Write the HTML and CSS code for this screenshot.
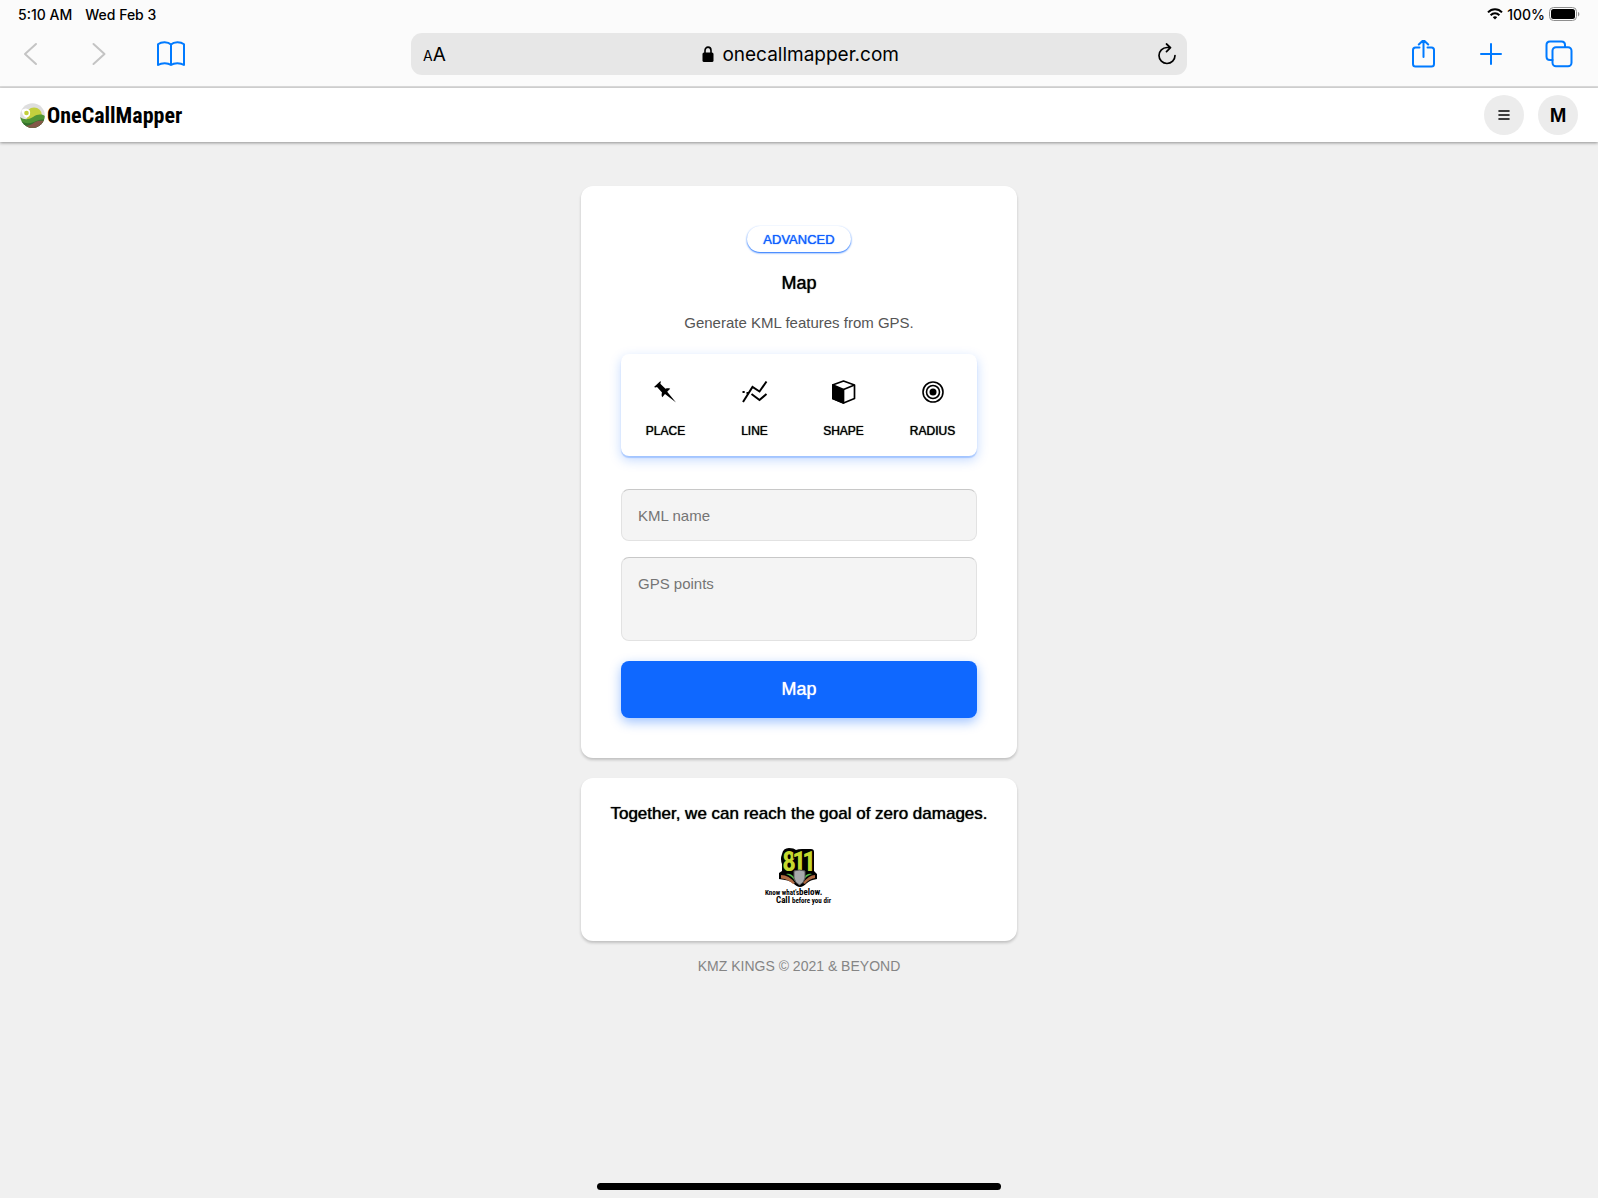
FILE: index.html
```html
<!DOCTYPE html>
<html lang="en">
  <head>
    <meta charset="utf-8">
    <meta name="viewport" content="width=device-width, initial-scale=1">
    <title>OneCallMapper</title>
    <link rel="stylesheet" href="styles.css">
  </head>

  <body>
    <div class="browser">
      <div class="status-bar">
        <div class="status-left">
          <span>5:10 AM</span>
          <span>Wed Feb 3</span>
        </div>
        <div class="status-right">
          <svg width="16" height="12" viewBox="0 0 16 12" fill="none" stroke="#000" stroke-width="2">
            <path d="M1 4.4C5 .2 11 .2 15 4.4"/>
            <path d="M3.6 7.2C6.2 4.6 9.8 4.6 12.4 7.2"/>
            <path d="M5.8 9.2C7 8 9 8 10.2 9.2L8 11.6z" fill="#000" stroke="none"/>
          </svg>
          <span>100%</span>
          <svg width="31" height="14" viewBox="0 0 31 14">
            <rect x=".5" y=".5" width="27" height="13" rx="4" fill="none" stroke="#8e8e8e"/>
            <rect x="2" y="2" width="24" height="10" rx="2.5"/>
            <path d="M29 5v4.400c1.800-.6 1.800-3.800 0-4.400z" fill="#8e8e8e"/>
          </svg>
        </div>
      </div>

      <div class="toolbar">
        <div class="tools tools-left">
          <button class="tool off" aria-label="Back">
            <svg width="28" height="28" viewBox="0 0 28 28"><path d="M20 4L9 14l11 10"/></svg>
          </button>
          <button class="tool off" aria-label="Forward">
            <svg width="28" height="28" viewBox="0 0 28 28"><path d="M8.500 4l11 10L8.500 24"/></svg>
          </button>
          <button class="tool tool-book" aria-label="Bookmarks">
            <svg width="28" height="28" viewBox="0 0 28 28"><path d="M14 4.500C11 1.600 4.500 1.600 1 4.200V25c3.500-2.400 10-2.400 13 0 3-2.400 9.500-2.400 13 0V4.200C23.500 1.600 17 1.600 14 4.500zM14 4.500V25"/></svg>
          </button>
        </div>

        <div class="address">
          <button class="text-size" aria-label="Text size"><small>A</small>A</button>
          <label class="url">
            <svg width="12" height="16" viewBox="0 0 12 16">
              <path d="M3 7V4.500C3 0 9 0 9 4.500V7" fill="none" stroke="#000" stroke-width="1.600"/>
              <rect x=".5" y="6.500" width="11" height="9.500" rx="1.500"/>
            </svg>
            <input type="text" value="onecallmapper.com" aria-label="Address">
          </label>
          <button class="reload" aria-label="Reload">
            <svg width="20" height="22" viewBox="0 0 20 22" fill="none" stroke="#000" stroke-width="1.700" stroke-linecap="round" stroke-linejoin="round">
              <path d="M18 12.500a8 8 0 1 1-8-8h3.500M9.500 1l4 3.600-4 4"/>
            </svg>
          </button>
        </div>

        <div class="tools tools-right">
          <button class="tool" aria-label="Share">
            <svg width="28" height="28" viewBox="0 0 28 28"><path d="M10.500 7.500H6.500q-2.500 0-2.500 2.500v14q0 2.500 2.500 2.500h16q2.500 0 2.500-2.500V10q0-2.500-2.500-2.500h-4M14.500 17V0M9.800 4.500L14.500 0l4.700 4.500"/></svg>
          </button>
          <button class="tool" aria-label="New tab">
            <svg width="28" height="28" viewBox="0 0 28 28"><path d="M14 4v20M4 14h20"/></svg>
          </button>
          <button class="tool" aria-label="Tabs">
            <svg width="28" height="28" viewBox="0 0 28 28"><path d="M7.500 20H5q-3.500 0-3.500-3.500V5Q1.500 1.500 5 1.500h11.500Q20 1.500 20 5v2"/><rect x="7.500" y="7.200" width="19" height="19" rx="3.500"/></svg>
          </button>
        </div>
      </div>
    </div>

    <header class="site-header">
      <a class="brand" href="#">
        <svg width="25" height="25" viewBox="0 0 25 25">
          <clipPath id="round"><circle cx="12.500" cy="12.500" r="12.300"/></clipPath>
          <g clip-path="url(#round)">
            <rect width="25" height="25" fill="#dedede"/>
            <circle cx="14" cy="12.500" r="8" fill="#c2cf3d"/>
            <path d="M0 14c4 3 8 3 13 0s8-3 12-1v12H0z" fill="#4f9436"/>
            <path d="M0 17c4 4 9 4 14 2s7-3 11-2v9H0z" fill="#34702c"/>
            <path d="M3 23c5 0 8-1 12-4 3-1.500 6-1.500 10-1v7H3z" fill="#845848"/>
            <path d="M1.500 7q4.500-3 8 0 2.500 5-3 8-5-3-5-8z" fill="#fff"/>
            <circle cx="6.500" cy="10" r="2.300" fill="#c2cf3d"/>
          </g>
        </svg>
        <span>OneCallMapper</span>
      </a>
      <div class="header-buttons">
        <button class="round-button" aria-label="Menu">
          <svg width="12" height="10" viewBox="0 0 12 10"><path d="M1 1h10M1 5h10M1 9h10" stroke="#000" stroke-width="1.600" stroke-linecap="round"/></svg>
        </button>
        <button class="round-button">M</button>
      </div>
    </header>

    <main>
      <form class="card map-card">
        <button type="button" class="badge">ADVANCED</button>
        <h1>Map</h1>
        <p class="intro">Generate KML features from GPS.</p>

        <div class="types">
          <button type="button" class="type">
            <svg width="24" height="24" viewBox="0 0 24 24"><path d="M6.500 1c.4 1.200.2 2-.2 2.700l5.200 5c1.800-.6 3.300-.6 4.700 0l-3 3L22 22.500 11 14l-2.700 3.200c-.9-1.500-.8-3-.3-4.800L3 7c-1 .5-2 .5-3 0z"/></svg>
            <span>PLACE</span>
          </button>
          <button type="button" class="type">
            <svg width="26" height="24" viewBox="0 0 26 24" fill="none" stroke="#000" stroke-width="2"><path d="M1 22L10.500 7l7 4.500L24.500 1.500M9.500 14l8 6 7-6M.5 12h2.200M4.500 13h2"/></svg>
            <span>LINE</span>
          </button>
          <button type="button" class="type">
            <svg width="24" height="24" viewBox="0 0 24 24" stroke="#000" stroke-width="1.700" stroke-linejoin="round"><path d="M11.500 1l11 4v13.500l-11 4.500-11-4.500V5z" fill="#fff"/><path d="M1 5l10.500 4.500V23L1 18.500z"/><path d="M11.500 9.500l11-4.500" fill="none"/></svg>
            <span>SHAPE</span>
          </button>
          <button type="button" class="type">
            <svg width="24" height="24" viewBox="0 0 24 24" fill="none" stroke="#000" stroke-width="1.600"><circle cx="12" cy="12" r="10"/><circle cx="12" cy="12" r="6.500"/><circle cx="12" cy="12" r="3.500" fill="#000" stroke="none"/></svg>
            <span>RADIUS</span>
          </button>
        </div>

        <input class="field" type="text" placeholder="KML name" aria-label="KML name">
        <textarea class="field field-points" placeholder="GPS points" aria-label="GPS points"></textarea>
        <button type="button" class="submit">Map</button>
      </form>

      <section class="card goal-card">
        <h2>Together, we can reach the goal of zero damages.</h2>
        <svg class="logo-811" width="70" height="61" viewBox="0 -3 70 61">
          <path d="M18 5Q19 -1 25 -1Q30 -1 32 1Q34 0 38 0H47Q50 0 50 3V22L53 25V30Q46 31 43 34Q39 38 36 38Q33 38 29 34Q25 31 15 30V24L18 22V15Q16 10 18 5Z"/>
          <path d="M17 26q8 0 14 8l-2 1q-5-5-12-5.500zM51 26q-6 0-12 8l2 1q4-5 10-6z" fill="#ad6841"/>
          <path d="M22 25q6-1 9 5v2q-3-5-9-7zM48 25q-6-1-9 5v2q3-5 9-7z" fill="#50b848"/>
          <text class="digits" x="18 28 38" y="22">811</text>
          <path d="M30 22q5-2 11 0v7q-1 5-5.500 7Q31 34 30 29z" fill="#a7a9ac" stroke="#555"/>
          <text class="motto" x="1" y="46">Know what's</text>
          <text class="motto motto-big" x="35" y="46">below.</text>
          <text class="motto motto-big" x="12" y="54">Call</text>
          <text class="motto" x="28" y="54">before you dir</text>
        </svg>
      </section>

      <footer>KMZ KINGS © 2021 &amp; BEYOND</footer>
    </main>

    <div class="home-bar"></div>
  </body>
</html>
```
FILE: styles.css
```css
* {
  box-sizing: border-box;
}
body {
  display: flex;
  flex-direction: column;
  min-height: 100vh;
  margin: 0;
  background: #f0f0f0;
  color: #000;
  font-family: "Liberation Sans", Arial, sans-serif;
}
button {
  padding: 0;
  border: none;
  background: none;
  color: inherit;
  font-family: inherit;
  cursor: pointer;
}
svg {
  display: block;
}

/* browser chrome */
.browser {
  background: #fbfbfb;
  border-bottom: 2px solid #dcdcdc;
  font-family: Inter, sans-serif;
}
.status-bar {
  display: flex;
  justify-content: space-between;
  height: 28px;
  padding: 0 18px;
  font-size: 14px;
  font-weight: 500;
}
.status-left,
.status-right {
  display: flex;
  align-items: center;
}
.status-left {
  gap: 13px;
}
.status-right {
  gap: 4px;
}
.toolbar {
  display: grid;
  grid-template-columns: 1fr minmax(0, 776px) 1fr;
  align-items: center;
  height: 58px;
  padding-bottom: 6px;
}
.tools {
  display: flex;
}
.tools-left {
  gap: 41px;
  padding-left: 16px;
}
.tools-right {
  justify-content: flex-end;
  gap: 40px;
  padding-right: 25px;
}
.tool svg {
  fill: none;
  stroke: #007aff;
  stroke-width: 2;
  stroke-linecap: round;
  stroke-linejoin: round;
}
.tool.off svg {
  stroke: #c4c4c4;
}
.tool-book {
  padding: 0 3px;
}
.address {
  display: flex;
  align-items: center;
  justify-content: space-between;
  height: 42px;
  padding: 0 10px 0 12px;
  border-radius: 11px;
  background: #e7e7e7;
}
.text-size {
  font-size: 19px;
}
.text-size small {
  font-size: 14px;
}
.url {
  display: flex;
  align-items: center;
  gap: 8px;
}
.url input {
  width: 178px;
  padding: 0;
  border: none;
  background: none;
  font-family: Inter, sans-serif;
  font-size: 19px;
}

/* site header */
.site-header {
  display: flex;
  align-items: center;
  justify-content: space-between;
  height: 54px;
  padding: 0 20px;
  background: #fff;
  box-shadow: 0 1px 3px rgba(0, 0, 0, 0.4);
}
.brand {
  display: flex;
  align-items: center;
  gap: 2px;
  color: #000;
  font-family: "Roboto Condensed", Roboto, sans-serif;
  font-size: 22px;
  font-weight: bold;
  text-decoration: none;
}
.header-buttons {
  display: flex;
  gap: 14px;
}
.round-button {
  display: flex;
  align-items: center;
  justify-content: center;
  width: 40px;
  height: 40px;
  border-radius: 50%;
  background: #ececec;
  font-size: 20px;
  font-weight: bold;
}

main {
  flex: 1;
  display: flex;
  flex-direction: column;
  align-items: center;
  padding: 44px 20px 20px;
}
.card {
  display: flex;
  flex-direction: column;
  align-items: center;
  width: 100%;
  max-width: 436px;
  border-radius: 12px;
  background: #fff;
  box-shadow: 0 2px 3px rgba(0, 0, 0, 0.2);
}
.map-card {
  padding: 40px;
}
h1,
h2,
p {
  margin: 0;
}
h1,
h2,
.badge,
.type,
.submit {
  font-weight: normal;
  text-shadow: 0 0 1px currentColor;
}
.badge {
  height: 26px;
  padding: 0 16px;
  border-radius: 13px;
  box-shadow: 0 1px 2px #0f68ff;
  color: #0f5fff;
  font-size: 13px;
}
h1 {
  margin-top: 21px;
  font-size: 18px;
  line-height: 20px;
}
.intro {
  margin-top: 20px;
  color: #555;
  font-size: 15px;
  line-height: 20px;
}
.types {
  display: grid;
  grid-template-columns: repeat(4, 1fr);
  width: 100%;
  height: 102px;
  margin: 21px 0 33px;
  border-radius: 8px;
  box-shadow: 0 2px 1px rgba(15, 104, 255, 0.25), 0 4px 12px rgba(15, 104, 255, 0.25);
}
.type {
  display: flex;
  flex-direction: column;
  align-items: center;
  justify-content: center;
  gap: 20px;
  padding-top: 8px;
  font-size: 12px;
}
.field {
  width: 100%;
  height: 52px;
  padding: 0 16px;
  border: 1px solid #e2e2e2;
  border-top-color: #c8c8c8;
  border-radius: 8px;
  background: #f4f4f4;
  font-family: inherit;
  font-size: 15px;
}
.field::placeholder {
  color: #757575;
}
.field-points {
  height: 84px;
  margin: 16px 0 20px;
  padding-top: 17px;
  resize: none;
}
.submit {
  width: 100%;
  height: 57px;
  border-radius: 8px;
  background: #0f68ff;
  box-shadow: 0 4px 12px rgba(15, 104, 255, 0.4);
  color: #fff;
  font-size: 18px;
}

.goal-card {
  margin-top: 20px;
  padding: 26px 20px 34px;
}
h2 {
  font-size: 17px;
  line-height: 20px;
}
.logo-811 {
  margin-top: 22px;
}
.digits {
  fill: #c4d82e;
  stroke: #000;
  stroke-width: 2px;
  paint-order: stroke;
  font-family: "Roboto Condensed", Roboto, sans-serif;
  font-size: 28px;
  font-weight: bold;
}
.motto {
  font-family: "Roboto Condensed", Roboto, sans-serif;
  font-size: 7px;
  font-weight: bold;
}
.motto-big {
  font-size: 9px;
}
footer {
  margin-top: 15px;
  color: #858585;
  font-size: 14px;
  line-height: 20px;
}
.home-bar {
  align-self: center;
  width: 404px;
  max-width: 60%;
  height: 7px;
  margin-bottom: 8px;
  border-radius: 4px;
  background: #000;
}
```
